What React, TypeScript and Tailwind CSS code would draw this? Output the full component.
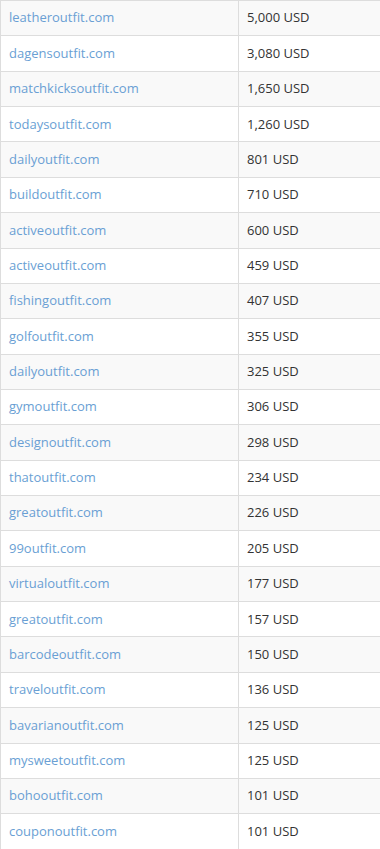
import React from "react";

const rows: [string, string][] = [
  ["leatheroutfit.com", "5,000 USD"],
  ["dagensoutfit.com", "3,080 USD"],
  ["matchkicksoutfit.com", "1,650 USD"],
  ["todaysoutfit.com", "1,260 USD"],
  ["dailyoutfit.com", "801 USD"],
  ["buildoutfit.com", "710 USD"],
  ["activeoutfit.com", "600 USD"],
  ["activeoutfit.com", "459 USD"],
  ["fishingoutfit.com", "407 USD"],
  ["golfoutfit.com", "355 USD"],
  ["dailyoutfit.com", "325 USD"],
  ["gymoutfit.com", "306 USD"],
  ["designoutfit.com", "298 USD"],
  ["thatoutfit.com", "234 USD"],
  ["greatoutfit.com", "226 USD"],
  ["99outfit.com", "205 USD"],
  ["virtualoutfit.com", "177 USD"],
  ["greatoutfit.com", "157 USD"],
  ["barcodeoutfit.com", "150 USD"],
  ["traveloutfit.com", "136 USD"],
  ["bavarianoutfit.com", "125 USD"],
  ["mysweetoutfit.com", "125 USD"],
  ["bohooutfit.com", "101 USD"],
  ["couponoutfit.com", "101 USD"],
];

export default function App() {
  return (
    <div
      className="w-[380px] h-[849px] overflow-hidden bg-white text-[13px]"
      style={{ fontFamily: '"Open Sans", sans-serif' }}
    >
      <div className="flex flex-col border-l border-[#dddddd]">
        {rows.map(([d, v], i) => (
          <div
            key={i}
            className={`flex h-[35.36px] shrink-0 border-t border-[#dddddd] ${
              i % 2 === 0 ? "bg-[#f9f9f9]" : "bg-white"
            }`}
          >
            <div className="w-[238px] flex items-center pl-[8px] border-r border-[#dddddd] text-[#6a9fd4]">
              {d}
            </div>
            <div className="flex-1 flex items-center pl-[8px] text-[#333333]">
              {v}
            </div>
          </div>
        ))}
      </div>
    </div>
  );
}
